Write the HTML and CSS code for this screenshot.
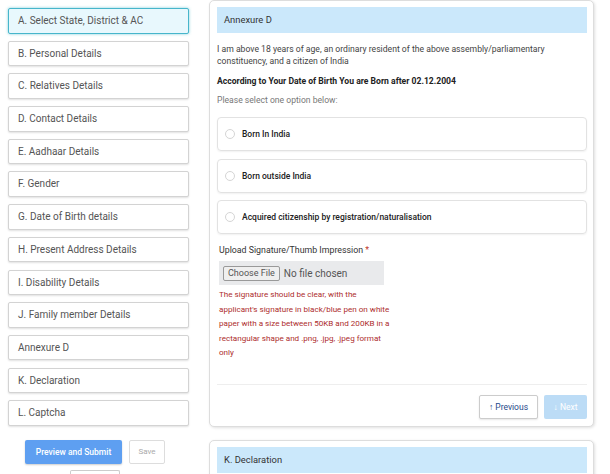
FILE: index.html
```html
<!DOCTYPE html>
<html>
<head>
<meta charset="utf-8">
<link rel="stylesheet" href="styles.css">
</head>
<body>
<div class="page">
  <aside class="sidebar">
    <div class="step active">A. Select State, District &amp; AC</div>
    <div class="step">B. Personal Details</div>
    <div class="step">C. Relatives Details</div>
    <div class="step">D. Contact Details</div>
    <div class="step">E. Aadhaar Details</div>
    <div class="step">F. Gender</div>
    <div class="step">G. Date of Birth details</div>
    <div class="step">H. Present Address Details</div>
    <div class="step">I. Disability Details</div>
    <div class="step">J. Family member Details</div>
    <div class="step">Annexure D</div>
    <div class="step">K. Declaration</div>
    <div class="step">L. Captcha</div>
    <div class="actions">
      <button class="btn-primary">Preview and Submit</button>
      <button class="btn-save">Save</button>
    </div>
    <div class="actions2">
      <button class="btn-extra"></button>
    </div>
  </aside>
  <main class="main">
    <section class="card">
      <div class="card-head">Annexure D</div>
      <p class="para">I am above 18 years of age, an ordinary resident of the above assembly/parliamentary constituency, and a citizen of India</p>
      <p class="bold">According to Your Date of Birth You are Born after 02.12.2004</p>
      <p class="hint">Please select one option below:</p>
      <div class="options">
        <label class="option"><span class="radio"></span>Born In India</label>
        <label class="option"><span class="radio"></span>Born outside India</label>
        <label class="option"><span class="radio"></span>Acquired citizenship by registration/naturalisation</label>
      </div>
      <div class="upload-label">Upload Signature/Thumb Impression <span class="req">*</span></div>
      <div class="file-box"><span class="file-btn">Choose File</span><span class="file-text">No file chosen</span></div>
      <p class="note">The signature should be clear, with the<br>applicant's signature in black/blue pen on white<br>paper with a size between 50KB and 200KB in a<br>rectangular shape and .png, .jpg, .jpeg format<br>only</p>
      <div class="footer">
        <button class="btn-prev">&#8593; Previous</button>
        <button class="btn-next">&#8595; Next</button>
      </div>
    </section>
    <section class="card card2">
      <div class="card-head">K. Declaration</div>
    </section>
  </main>
</div>
</body>
</html>
```
FILE: styles.css
```css
* { box-sizing: border-box; }
html, body { margin: 0; padding: 0; background: #fff; overflow: hidden; }
body { font-family: Roboto, "Liberation Sans", Arial, sans-serif; color: #333; width: 610px; height: 474px; }
.page { display: flex; gap: 20px; padding-left: 8px; }
.sidebar { width: 181px; display: flex; flex-direction: column; gap: 7.2px; padding-top: 8px; }
.step {
  height: 25.5px; border: 1px solid #d3d3d3; border-radius: 2px; background: #fff;
  font-size: 10px; line-height: 23px; padding-left: 9px; color: #555;
  box-shadow: 0 1px 2px rgba(0,0,0,0.12);
}
.step.active { border-color: #47b6cb; background: #e8f8fd; box-shadow: 0 0 3px rgba(71,182,203,0.7); }
.actions { display: flex; gap: 7px; padding-left: 17px; margin-top: 7px; }
.btn-primary {
  width: 97px; height: 24px; border: 0; border-radius: 2px; background: #5e9ff1; color: #fff;
  font-family: Roboto, "Liberation Sans", sans-serif; font-size: 8.5px; font-weight: 500; box-shadow: 0 1px 2px rgba(0,0,0,0.2);
}
.btn-save {
  width: 36px; height: 24px; border: 1px solid #ddd; border-radius: 2px; background: #fff; color: #aaa;
  font-family: Roboto, "Liberation Sans", sans-serif; font-size: 8px;
}
.actions2 { padding-left: 62px; margin-top: -1px; }
.btn-extra { width: 50px; height: 12px; border: 1px solid #ccc; border-bottom: 0; border-radius: 2px 2px 0 0; background: #fff; display: block; }
.main { width: 385px; display: flex; flex-direction: column; gap: 13px; }
.card {
  border: 1px solid #ddd; border-radius: 5px; padding: 6px 6px 7px 7px; background: #fff;
  box-shadow: 1px 1px 3px rgba(0,0,0,0.12);
}
.card-head { height: 26px; background: #cbe8fb; font-size: 9.4px; line-height: 26px; padding-left: 7px; color: #333; }
.para { margin: 10px 0 0; font-size: 8.65px; line-height: 12px; color: #444; }
.bold { margin: 8px 0 0; font-size: 8.6px; line-height: 12px; font-weight: 700; color: #222; }
.hint { margin: 7px 0 0; font-size: 8.6px; line-height: 12px; color: #777; }
.options { display: flex; flex-direction: column; gap: 7.5px; margin-top: 11px; }
.option {
  display: flex; align-items: center; height: 34px; border: 1px solid #e2e2e2; border-radius: 4px;
  padding-left: 7px; font-size: 8.5px; font-weight: 500; color: #222; box-shadow: 0 1px 2px rgba(0,0,0,0.06);
}
.radio { width: 10px; height: 10px; border: 1px solid #d5d5d5; border-radius: 50%; margin-right: 7px; background: #fff; }
.upload-label { margin-top: 10px; margin-left: 2px; font-size: 8.8px; line-height: 12px; color: #333; }
.req { color: #c0392b; }
.file-box {
  margin: 5px 0 0 2px; width: 165px; height: 24px; background: #e9eaec; display: flex; align-items: center; padding-left: 4px;
}
.file-btn {
  height: 15px; border: 1px solid #999; border-radius: 2px; background: #efefef; font-size: 9px; line-height: 13px;
  padding: 0 4px; color: #555;
}
.file-text { margin-left: 4px; font-size: 10px; color: #555; }
.note { margin: 2px 0 0 2px; font-size: 8.1px; line-height: 14.6px; color: #ad2d2d; }
.footer { margin-top: 24px; border-top: 1px solid #eee; padding-top: 10px; display: flex; justify-content: flex-end; gap: 6px; }
.btn-prev {
  width: 59px; height: 24px; border: 1px solid #ccc; border-radius: 2px; background: #fff; color: #1f4a8a;
  font-family: Roboto, "Liberation Sans", sans-serif; font-size: 8.5px; box-shadow: 0 1px 2px rgba(0,0,0,0.1);
}
.btn-next {
  width: 43px; height: 24px; border: 0; border-radius: 2px; background: #bcdcf6; color: #fff;
  font-family: Roboto, "Liberation Sans", sans-serif; font-size: 8.5px;
}
.card2 { padding-bottom: 20px; }
```
